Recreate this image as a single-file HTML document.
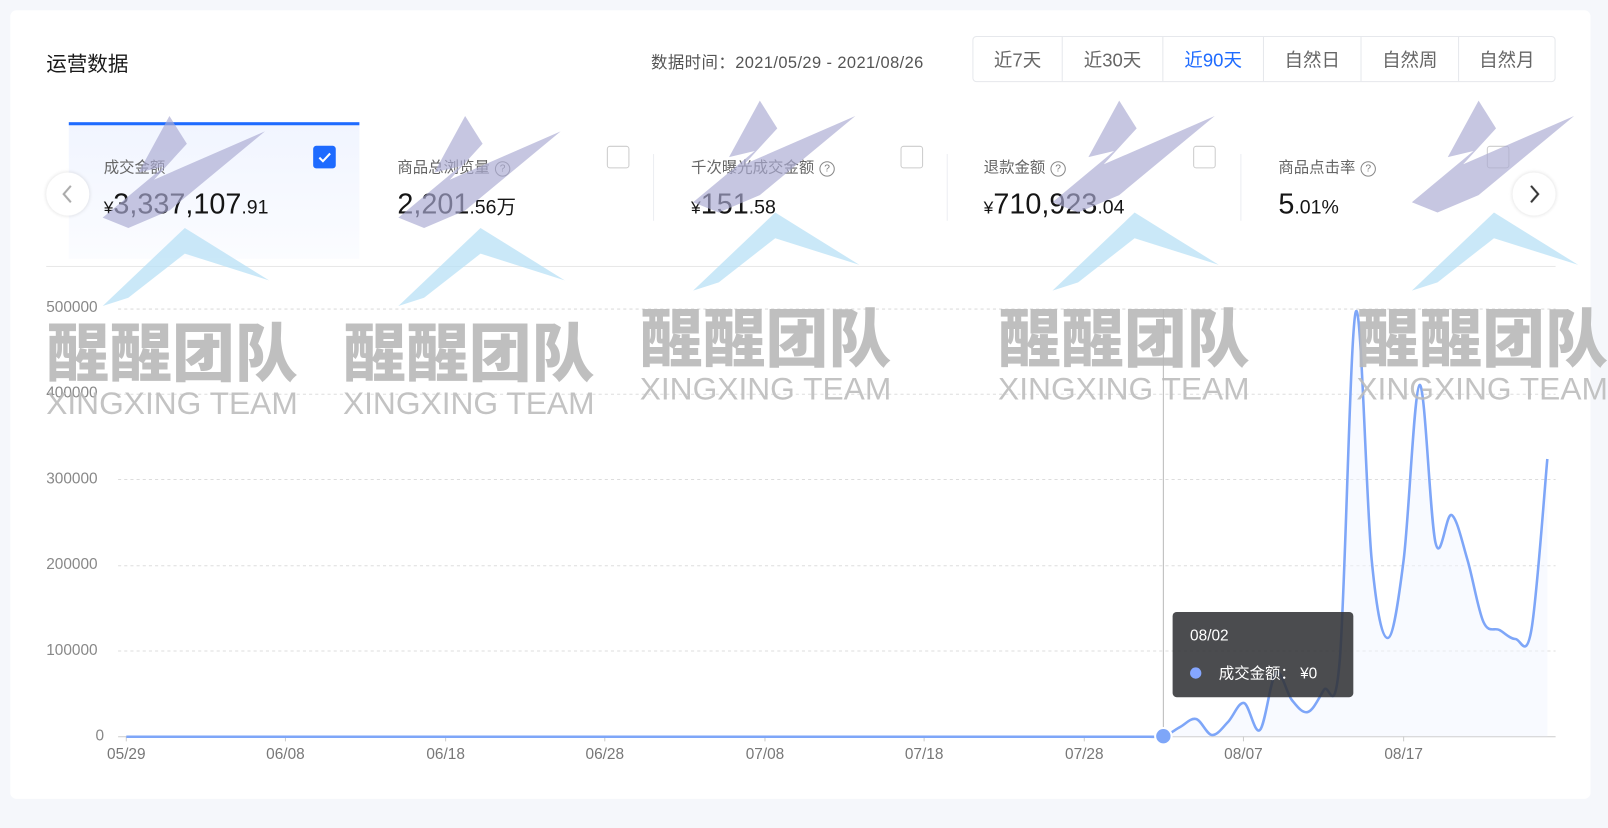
<!DOCTYPE html>
<html><head><meta charset="utf-8"><style>
html,body{margin:0;padding:0;width:1608px;height:827px;overflow:hidden;background:#f5f7fb;font-family:"Liberation Sans","Noto Sans CJK SC",sans-serif;}
#w{position:absolute;left:0;top:0;width:1566px;height:806px;transform:scale(1.0268);transform-origin:0 0;}
.card{position:absolute;left:10px;top:10px;width:1539px;height:768px;background:#fff;border-radius:6px;}
.a{position:absolute;white-space:nowrap;}
.title{left:45px;top:46px;font-size:20px;color:#1a1a1a;}
.date{left:634px;top:47px;font-size:16px;color:#555;letter-spacing:0.4px;}
.btns{position:absolute;left:947px;top:35px;width:566px;height:43px;border:1px solid #e6e8ec;border-radius:4px;display:flex;}
.btns div{border-right:1px solid #e6e8ec;font-size:18px;color:#666;display:flex;align-items:center;justify-content:center;}
.btns div:last-child{border-right:none}
.lab{font-size:15px;color:#666;top:152px;}
.q{display:inline-block;width:13px;height:13px;border:1px solid #888;border-radius:50%;font-size:10px;line-height:13px;text-align:center;color:#777;margin-left:5px;vertical-align:1px;}
.val{top:183px;font-size:28px;color:#151515;}
.val small{font-size:19px;}
.val .y{font-size:17px;}
.cb{position:absolute;width:20px;height:20px;border:1px solid #ccc;border-radius:3px;background:#fff;top:142px;}
.sep{position:absolute;width:1px;height:65px;top:150px;background:#eceef2;}
.yl{position:absolute;left:45px;font-size:15px;color:#888;}
.xl{position:absolute;top:726px;font-size:15px;color:#777;transform:translateX(-50%);}
</style></head><body><div id="w">
<div class="card"></div>
<div class="a title">运营数据</div>
<div class="a date">数据时间：2021/05/29 - 2021/08/26</div>
<div class="btns">
<div style="width:86px">近7天</div><div style="width:97px">近30天</div><div style="width:97px;color:#1e6bff">近90天</div><div style="width:94px">自然日</div><div style="width:94px">自然周</div><div style="flex:1">自然月</div>
</div>
<div style="position:absolute;left:67px;top:119px;width:283px;height:130px;background:linear-gradient(#f1f5ff,#fbfcff);border-top:3px solid #1e6bff;"></div>
<div class="cb" style="left:305px;background:#1e6bff;border-color:#1e6bff;"><svg width="20" height="20"><path d="M5 10.5l3.5 3.5 7-7.5" stroke="#fff" stroke-width="2" fill="none"/></svg></div>
<div class="cb" style="left:591px"></div><div class="cb" style="left:877px"></div><div class="cb" style="left:1162px"></div><div class="cb" style="left:1448px"></div>
<div class="sep" style="left:636px"></div><div class="sep" style="left:922px"></div><div class="sep" style="left:1208px"></div>
<div class="a lab" style="left:101px">成交金额</div>
<div class="a lab" style="left:387px">商品总浏览量<span class="q">?</span></div>
<div class="a lab" style="left:673px">千次曝光成交金额<span class="q">?</span></div>
<div class="a lab" style="left:958px">退款金额<span class="q">?</span></div>
<div class="a lab" style="left:1245px">商品点击率<span class="q">?</span></div>
<div class="a val" style="left:101px"><span class="y">¥</span>3,337,107<small>.91</small></div>
<div class="a val" style="left:387px">2,201<small>.56万</small></div>
<div class="a val" style="left:673px"><span class="y">¥</span>151<small>.58</small></div>
<div class="a val" style="left:958px"><span class="y">¥</span>710,923<small>.04</small></div>
<div class="a val" style="left:1245px">5<small>.01%</small></div>
<div style="position:absolute;left:45px;top:259px;width:1470px;height:1px;background:#e8e8e8"></div>
<div class="yl" style="top:291px">500000</div><div class="yl" style="top:374px">400000</div><div class="yl" style="top:458px">300000</div><div class="yl" style="top:541px">200000</div><div class="yl" style="top:625px">100000</div><div class="yl" style="left:93px;top:708px">0</div>
<div class="xl" style="left:123px">05/29</div><div class="xl" style="left:278px">06/08</div><div class="xl" style="left:434px">06/18</div><div class="xl" style="left:589px">06/28</div><div class="xl" style="left:745px">07/08</div><div class="xl" style="left:900px">07/18</div><div class="xl" style="left:1056px">07/28</div><div class="xl" style="left:1211px">08/07</div><div class="xl" style="left:1367px">08/17</div>
<svg id="ch" width="1566" height="806" style="position:absolute;left:0;top:0">
<g stroke="#ddd" stroke-dasharray="3 3"><line x1="115" x2="1515" y1="301" y2="301"/><line x1="115" x2="1515" y1="384" y2="384"/><line x1="115" x2="1515" y1="467" y2="467"/><line x1="115" x2="1515" y1="551" y2="551"/><line x1="115" x2="1515" y1="634" y2="634"/></g>
<line x1="115" x2="1515" y1="717.5" y2="717.5" stroke="#ccc"/>
<g stroke="#ccc"><line x1="123" x2="123" y1="717" y2="722"/><line x1="278" x2="278" y1="717" y2="722"/><line x1="434" x2="434" y1="717" y2="722"/><line x1="589" x2="589" y1="717" y2="722"/><line x1="745" x2="745" y1="717" y2="722"/><line x1="900" x2="900" y1="717" y2="722"/><line x1="1056" x2="1056" y1="717" y2="722"/><line x1="1211" x2="1211" y1="717" y2="722"/><line x1="1367" x2="1367" y1="717" y2="722"/></g>
<path id="area" fill="#f1f5ff" opacity="0.5"/>
<line x1="1133" x2="1133" y1="301" y2="717" stroke="#bbb"/>
<path id="ln" fill="none" stroke="#7ea6f8" stroke-width="2.5"/>
<circle cx="1133" cy="717" r="8" fill="#7ea6f8" stroke="#fff" stroke-width="2"/>
<g id="wm" opacity="0.9"></g>
</svg>
<div style="position:absolute;left:1142px;top:596px;width:176px;height:83px;background:rgba(50,51,55,0.88);border-radius:4px;color:#fff;">
<div class="a" style="left:17px;top:15px;font-size:15px">08/02</div>
<div style="position:absolute;left:17px;top:54px;width:11px;height:11px;border-radius:50%;background:#85a6ff"></div>
<div class="a" style="left:45px;top:49px;font-size:15px">成交金额：&nbsp;¥0</div>
</div>
<div style="position:absolute;left:45px;top:168px;width:42px;height:42px;border-radius:50%;background:#fff;box-shadow:0 0 4px rgba(0,0,0,0.15);"><svg width="42" height="42"><path d="M24 13l-7 8 7 8" stroke="#aaa" stroke-width="2" fill="none"/></svg></div>
<div style="position:absolute;left:1473px;top:168px;width:42px;height:42px;border-radius:50%;background:#fff;box-shadow:0 0 4px rgba(0,0,0,0.15);"><svg width="42" height="42"><path d="M18 13l7 8-7 8" stroke="#333" stroke-width="2" fill="none"/></svg></div>
</div>
<script>
var ys={65:736,66:727,67:719,68:735,69:722,70:703,71:730,72:673,73:700,74:712,75:690,76:660,77:312,78:560,79:638,80:560,81:385,82:543,83:515,84:560,85:622,86:630,87:639,88:630,89:459};
var k=1.0268,P=[];
for(var i=0;i<90;i++){var yr=ys[i]!==undefined?ys[i]:736;P.push([123+i*15.55,(i<65?717.5:yr/k)]);}
var d="M"+P[0][0]+" "+P[0][1];
for(var i=0;i<P.length-1;i++){var p0=P[Math.max(0,i-1)],p1=P[i],p2=P[i+1],p3=P[Math.min(P.length-1,i+2)];var t=0.17;
d+=" C"+(p1[0]+(p2[0]-p0[0])*t)+" "+(p1[1]+(p2[1]-p0[1])*t)+" "+(p2[0]-(p3[0]-p1[0])*t)+" "+(p2[1]-(p3[1]-p1[1])*t)+" "+p2[0]+" "+p2[1];}
document.getElementById('ln').setAttribute('d',d);
document.getElementById('area').setAttribute('d',d+" L"+P[89][0]+" 717 L123 717Z");
var wm=document.getElementById('wm'),h='';
var st=[[0,0],[288,0],[575,-15],[925,-15],[1275,-15]];
var tx=[[45,366,403],[334,366,403],[623,352,389],[972,352,389],[1321,352,389]];
for(var j=0;j<5;j++){var o=st[j];h+='<g transform="translate('+o[0]+','+o[1]+')">'+
'<polygon points="165,113 182,140 150,175 258,128 165,205 125,222 100,212 160,162 135,168" fill="#a9a9d2" opacity="0.75"/>'+
'<polygon points="100,298 180,222 262,273 180,247 125,290" fill="#b5e0f5" opacity="0.8"/></g>';
var t=tx[j];h+='<text x="'+t[0]+'" y="'+t[1]+'" font-family="Noto Sans CJK SC,sans-serif" font-weight="900" font-size="62" fill="#b8b8b8" textLength="245" lengthAdjust="spacingAndGlyphs">醒醒团队</text>'+
'<text x="'+t[0]+'" y="'+t[2]+'" font-family="Liberation Sans,sans-serif" font-size="31" fill="#bdbdbd" textLength="245" lengthAdjust="spacingAndGlyphs">XINGXING TEAM</text>';}
wm.innerHTML=h;
</script>
</body></html>
